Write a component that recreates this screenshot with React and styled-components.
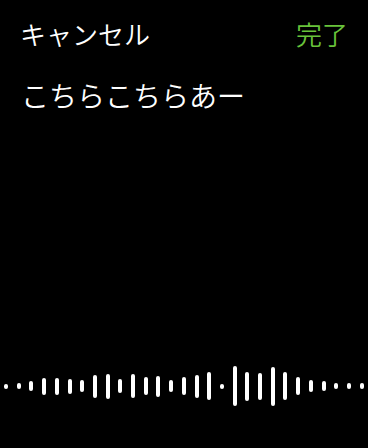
import styled, { createGlobalStyle } from "styled-components";

const GlobalStyle = createGlobalStyle`
  html, body {
    margin: 0;
    padding: 0;
    background: #000;
  }
  body {
    font-family: "Noto Sans CJK JP", "Noto Sans", sans-serif;
  }
`;

const Screen = styled.div`
  height: 100vh;
  display: flex;
  flex-direction: column;
  background: #000;
  color: #fff;
  overflow: hidden;
`;

const Header = styled.div`
  display: flex;
  justify-content: space-between;
  align-items: center;
  padding: 15px 20px 0 20px;
  height: 38px;
`;

const HeaderButton = styled.span`
  font-size: 26px;
  font-weight: 350;
  line-height: 38px;
  color: ${(p) => (p.$accent ? "#69c33b" : "#fff")};
`;

const Message = styled.div`
  margin-top: 22px;
  padding-left: 21px;
  font-size: 28px;
  font-weight: 350;
  line-height: 40px;
`;

const Wave = styled.div`
  margin-top: auto;
  margin-bottom: 40px;
  height: 44px;
  padding: 0 4px;
  display: flex;
  align-items: center;
  justify-content: space-between;
`;

const Bar = styled.div`
  width: 4px;
  border-radius: 2px;
  background: #fff;
`;

const levels = [5, 6, 10, 17, 17, 15, 12, 23, 25, 14, 24, 18, 21, 12, 18, 23, 28, 5, 40, 29, 27, 39, 28, 18, 12, 10, 6, 6, 6];

export default function App() {
  return (
    <>
      <GlobalStyle />
      <Screen>
        <Header>
          <HeaderButton>キャンセル</HeaderButton>
          <HeaderButton $accent>完了</HeaderButton>
        </Header>
        <Message>こちらこちらあー</Message>
        <Wave>
          {levels.map((h, i) => (
            <Bar key={i} style={{ height: h }} />
          ))}
        </Wave>
      </Screen>
    </>
  );
}
